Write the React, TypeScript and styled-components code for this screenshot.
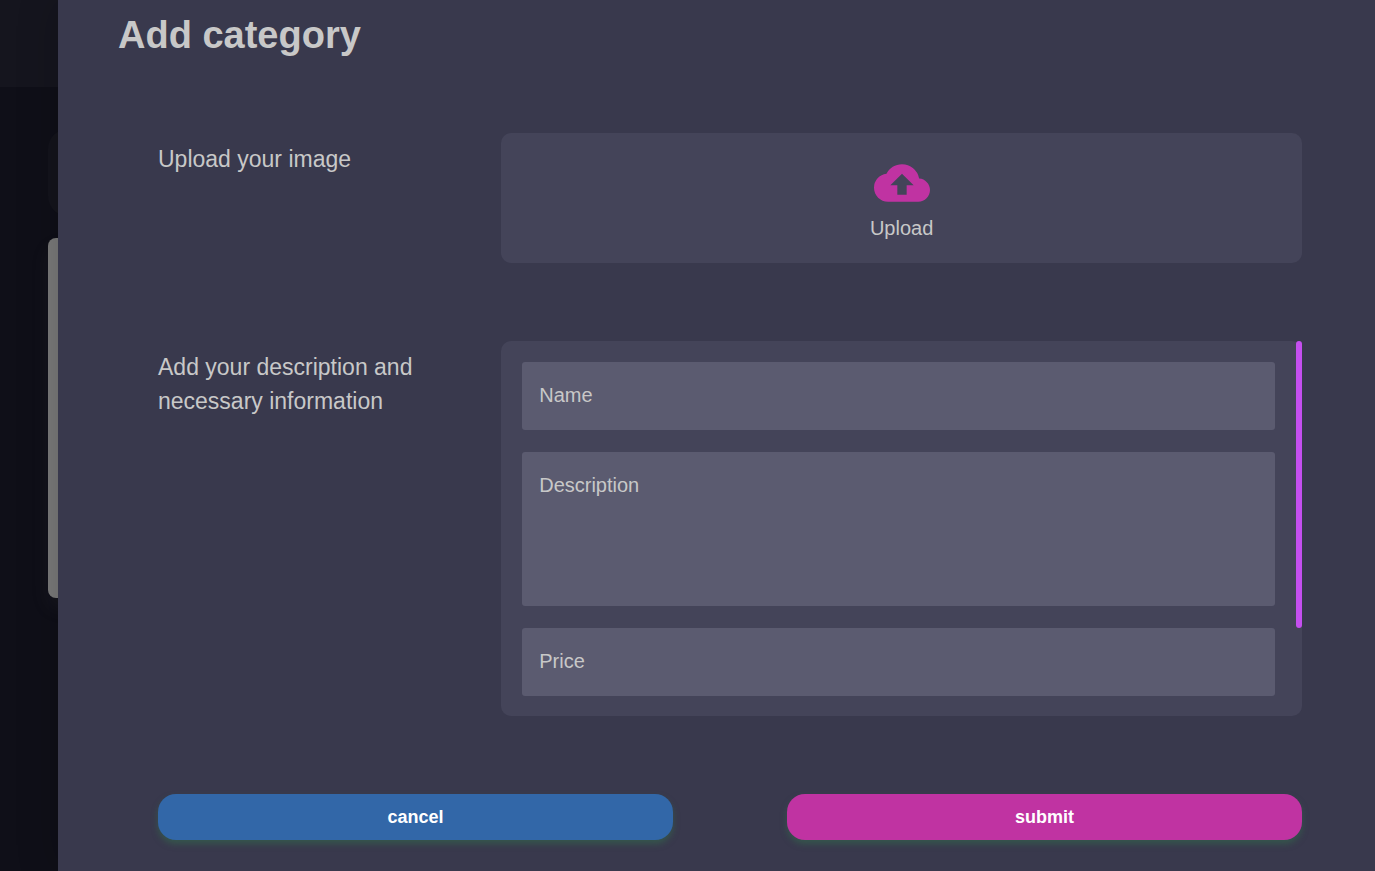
import React from "react";
import styled, { createGlobalStyle, css } from "styled-components";
import { MdCloudUpload } from "react-icons/md";

const GlobalStyle = createGlobalStyle`
  *, *::before, *::after { box-sizing: border-box; }
  body {
    margin: 0;
    background: #0f0f18;
    color: #c8c8c8;
    font-family: "Liberation Sans", Arial, Helvetica, sans-serif;
  }
`;

const Screen = styled.div`
  display: grid;
  grid-template-columns: 58px minmax(0, 1fr);
  min-height: 100vh;
`;

const Backdrop = styled.div`
  overflow: hidden;
  background: #0f0f18;
`;

const BackdropHeader = styled.div`
  height: 87px;
  background: #15151e;
`;

const BackdropCards = styled.div`
  display: flex;
  flex-direction: column;
  gap: 22px;
  padding: 42px 0 0 48px;
`;

const BackdropToolbar = styled.div`
  width: 200px;
  height: 87px;
  border-radius: 20px;
  background: #14141c;
`;

const BackdropPanel = styled.div`
  width: 200px;
  height: 360px;
  border-radius: 8px;
  background: #7b7b7b;
  box-shadow: 0 10px 20px rgba(123, 123, 123, 0.08);
`;

const Modal = styled.main`
  position: relative;
  padding: 9px 73px 31px 60px;
  background: #39394d;
  box-shadow: 0 0 40px rgba(0, 0, 0, 0.2);
`;

const Title = styled.h1`
  margin: 0;
  font-size: 38px;
  line-height: 52px;
  font-weight: 700;
`;

const Form = styled.form`
  display: flex;
  flex-direction: column;
  gap: 78px;
  margin: 72px 0 0 40px;
`;

const Row = styled.div`
  display: grid;
  grid-template-columns: 3fr 7fr;
`;

const rowLabel = css`
  padding: 9px 60px 0 0;
  font-size: 23px;
  line-height: 34px;
`;

const RowLabel = styled.label`
  ${rowLabel}
`;

const RowHeading = styled.div`
  ${rowLabel}
`;

const UploadBox = styled.label`
  display: flex;
  flex-direction: column;
  align-items: center;
  height: 130px;
  padding-top: 22px;
  border-radius: 10px;
  background: #444459;
  font-size: 20px;
  line-height: 34px;
  cursor: pointer;

  svg {
    color: #c033a2;
  }
`;

const FileInput = styled.input`
  position: absolute;
  width: 1px;
  height: 1px;
  opacity: 0;
`;

const Fields = styled.div`
  position: relative;
  display: flex;
  flex-direction: column;
  gap: 22px;
  padding: 21px 27px 20px 21px;
  border-radius: 10px;
  background: #444459;
`;

const ScrollThumb = styled.span`
  position: absolute;
  top: 0;
  right: 0;
  width: 6px;
  height: 287px;
  border-radius: 3px;
  background: #c44fef;
`;

const field = css`
  display: block;
  width: 100%;
  border: 0;
  border-radius: 3px;
  background: #5b5b70;
  color: #c8c8c8;
  font-family: inherit;
  font-size: 20px;
  line-height: 24px;
  resize: none;

  &::placeholder {
    color: #c8c8c8;
    opacity: 1;
  }
`;

const TextField = styled.input`
  ${field}
  height: 68px;
  padding: 0 17px 2px;
`;

const TextArea = styled.textarea`
  ${field}
  height: 154px;
  padding: 21px 17px;
`;

const Actions = styled.div`
  display: flex;
  justify-content: space-between;
`;

const ActionButton = styled.button<{ $color: string }>`
  width: 45%;
  height: 46px;
  border: 0;
  border-radius: 18px;
  background: ${({ $color }) => $color};
  box-shadow: 0 4px 6px rgba(49, 114, 76, 0.5);
  color: #fff;
  font-family: inherit;
  font-size: 18px;
  font-weight: 700;
  cursor: pointer;
`;

export default function App() {
  return (
    <>
      <GlobalStyle />
      <Screen>
        <Backdrop aria-hidden="true">
          <BackdropHeader />
          <BackdropCards>
            <BackdropToolbar />
            <BackdropPanel />
          </BackdropCards>
        </Backdrop>
        <Modal>
          <Title>Add category</Title>
          <Form onSubmit={(event) => event.preventDefault()}>
            <Row>
              <RowLabel htmlFor="image">Upload your image</RowLabel>
              <UploadBox>
                <MdCloudUpload size={56} aria-hidden="true" />
                Upload
                <FileInput id="image" type="file" accept="image/*" />
              </UploadBox>
            </Row>
            <Row>
              <RowHeading>Add your description and necessary information</RowHeading>
              <Fields>
                <TextField type="text" placeholder="Name" aria-label="Name" />
                <TextArea placeholder="Description" aria-label="Description" />
                <TextField type="text" placeholder="Price" aria-label="Price" />
                <ScrollThumb />
              </Fields>
            </Row>
            <Actions>
              <ActionButton type="button" $color="#3267a8">cancel</ActionButton>
              <ActionButton type="submit" $color="#c033a2">submit</ActionButton>
            </Actions>
          </Form>
        </Modal>
      </Screen>
    </>
  );
}
